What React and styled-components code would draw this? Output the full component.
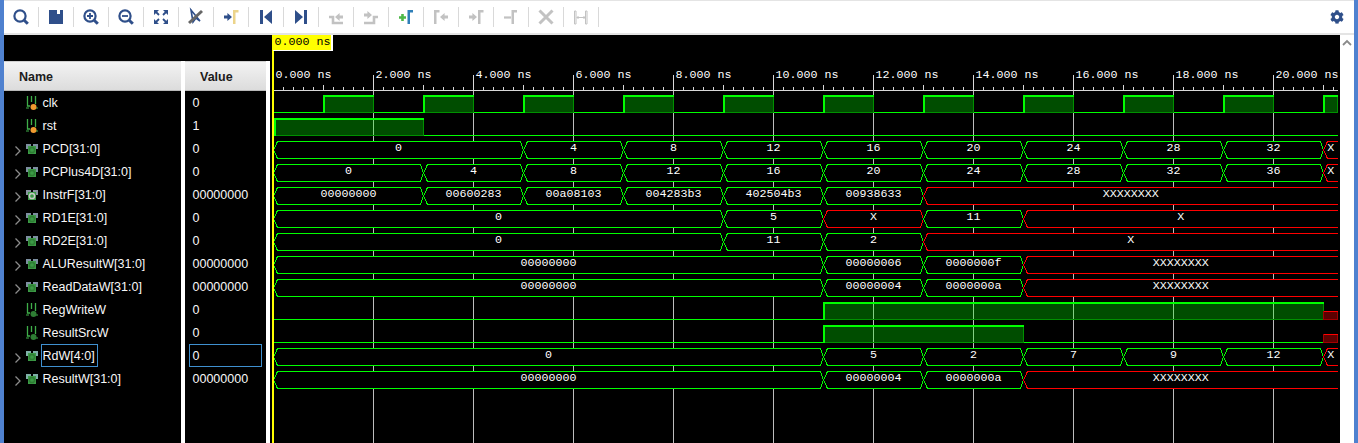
import React from "react";
import styled, { createGlobalStyle } from "styled-components";
import { FaCog } from "react-icons/fa";

const GlobalStyle = createGlobalStyle`
  html, body {
    margin: 0;
    padding: 0;
    background: #fff;
    overflow: hidden;
  }
`;

const NAVY = "#2f4f8a";
const GREY = "#c2c2c2";
const GOLD = "#ecd48a";
const GREEN = "#00ff00";
const RED = "#ff0000";

const Frame = styled.div`
  box-sizing: border-box;
  width: 1358px;
  height: 443px;
  display: flex;
  flex-direction: column;
  overflow: hidden;
  background: #fff;
  border-left: 4px solid #4f81cf;
  border-right: 4px solid #4f81cf;
`;

const Toolbar = styled.div`
  box-sizing: border-box;
  height: 35px;
  flex: none;
  display: flex;
  align-items: center;
  background: #fff;
  border-top: 1px solid #e4e4e4;
  border-bottom: 2px solid #e4e4e4;
`;

const ToolCell = styled.div`
  box-sizing: border-box;
  width: 35px;
  height: 20px;
  display: flex;
  align-items: center;
  justify-content: center;
  border-right: 1px solid #d9d9d9;
`;

const GearCell = styled.div`
  width: 34px;
  margin-left: auto;
  display: flex;
  justify-content: center;
  color: ${NAVY};
`;

const Workspace = styled.div`
  flex: 1;
  display: flex;
  min-height: 0;
`;

const SignalPane = styled.div`
  width: 266px;
  flex: none;
  display: flex;
  flex-direction: column;
  background: #000;
`;

const TopBand = styled.div`
  height: 26px;
  flex: none;
`;

const Columns = styled.div`
  flex: 1;
  display: grid;
  grid-template-columns: 177px 81px;
  column-gap: 4px;
  padding-right: 4px;
  background: #fff;
`;

const Column = styled.div`
  background: #000;
  display: flex;
  flex-direction: column;
`;

const HeaderCell = styled.div`
  box-sizing: border-box;
  height: 30px;
  flex: none;
  display: flex;
  align-items: center;
  padding-top: 1px;
  padding-left: ${({ $inset }) => $inset}px;
  background: linear-gradient(#f3f3f3, #dcdcdc);
  border-top: 1px solid #d0d0d0;
  border-bottom: 1px solid #b8b8b8;
  font: bold 12.5px "Liberation Sans", Arial, sans-serif;
  color: #1c1c1c;
`;

const NameRow = styled.div`
  height: 23px;
  flex: none;
  display: flex;
  align-items: center;
  padding-left: 9px;
`;

const ChevronSlot = styled.div`
  width: 10px;
  height: 12px;
  margin-right: 2px;
  flex: none;
`;

const IconSlot = styled.div`
  width: 14px;
  height: 16px;
  margin-right: 2px;
  flex: none;
`;

const NameLabel = styled.div`
  box-sizing: border-box;
  height: 23px;
  display: flex;
  align-items: center;
  padding: 0 2px 0 0.5px;
  border: 1px solid ${({ $selected }) => ($selected ? "#3f90d0" : "transparent")};
  font: 12.5px "Liberation Sans", Arial, sans-serif;
  color: #f8f8f8;
  white-space: nowrap;
`;

const ValueRow = styled.div`
  box-sizing: border-box;
  height: 23px;
  flex: none;
  margin-left: 4px;
  width: 73px;
  display: flex;
  align-items: center;
  padding-left: 2.5px;
  border: 1px solid ${({ $selected }) => ($selected ? "#3f90d0" : "transparent")};
  font: 12.5px "Liberation Sans", Arial, sans-serif;
  color: #f8f8f8;
`;

const WavePane = styled.div`
  flex: 1;
  background: #000;
  min-width: 0;
`;

const WaveSvg = styled.svg`
  display: block;
  shape-rendering: crispEdges;
`;

const MonoText = styled.text`
  font-family: "Liberation Mono", "Courier New", monospace;
  font-size: 11.67px;
  fill: ${({ $fill }) => $fill || "#fff"};
`;

const ScrollTrack = styled.div`
  width: 14px;
  flex: none;
  padding-top: 4px;
  display: flex;
  justify-content: center;
  background: #fff;
`;

// toolbar glyphs share a 24 box
const bracketAt = (x, color) => (
  <path d={`M${x} 5h5.5v2.4h-3V19H${x}z`} fill={color} />
);
const arrowRight = (x, color) => (
  <path d={`M${x} 10.6h3.4V8l4.6 4-4.6 4v-2.6H${x}z`} fill={color} />
);
const arrowLeft = (x, color) => (
  <path d={`M${x + 8} 10.6h-3.4V8L${x} 12l4.6 4v-2.6h3.4z`} fill={color} />
);

const lens = (
  <g fill="none" stroke={NAVY}>
    <circle cx="11" cy="11" r="5.6" strokeWidth="2.2" />
    <path d="M15.2 15.2l3.6 3.6" strokeWidth="3" />
  </g>
);

const TOOL_ICONS = [
  lens,
  <path
    d="M5 5h8v4h3V5h3v14H5z"
    fill={NAVY}
  />,
  <g>
    {lens}
    <path d="M8 11h6M11 8v6" stroke={NAVY} strokeWidth="1.8" />
  </g>,
  <g>
    {lens}
    <path d="M8 11h6" stroke={NAVY} strokeWidth="1.8" />
  </g>,
  <g fill={NAVY}>
    <path d="M5 5h5L5 10zM19 5h-5l5 5zM5 19h5l-5-5zM19 19h-5l5-5z" />
    <path d="M7 7l3 3M17 7l-3 3M7 17l3-3M17 17l-3-3" stroke={NAVY} strokeWidth="1.8" />
  </g>,
  <g fill="none">
    <path d="M7 5l2 12 3-4 4 3z" stroke={NAVY} strokeWidth="1.6" />
    <path d="M5 18L18 6" stroke="#666" strokeWidth="3" />
  </g>,
  <g>
    {arrowRight(5, NAVY)}
    {bracketAt(14, GOLD)}
  </g>,
  <path d="M6 5h3v14H6zM18 5v14l-8-7z" fill={NAVY} />,
  <path d="M6 5v14l8-7zM15 5h3v14h-3z" fill={NAVY} />,
  <g>
    <path d="M5 12h4v6h10" fill="none" stroke={GREY} strokeWidth="2.6" />
    {arrowLeft(11, GREY)}
  </g>,
  <g>
    <path d="M5 18h10v-6h4" fill="none" stroke={GREY} strokeWidth="2.6" />
    <path d="M5 8.6h3.4V6L13 10l-4.6 4v-2.6H5z" fill={GREY} />
  </g>,
  <g>
    <path d="M5 12.5h7M8.5 9v7" stroke="#4db848" strokeWidth="2.6" />
    {bracketAt(13.5, "#2f7fb8")}
  </g>,
  <g>
    {bracketAt(5, GREY)}
    {arrowLeft(11, GREY)}
  </g>,
  <g>
    {arrowRight(5, GREY)}
    {bracketAt(14, GREY)}
  </g>,
  <g>
    <path d="M5 12.5h7" stroke={GREY} strokeWidth="2.2" />
    {bracketAt(12.5, GREY)}
  </g>,
  <path d="M5.5 5.5l13 13M18.5 5.5l-13 13" stroke={GREY} strokeWidth="3" fill="none" />,
  <g fill="none" stroke={GREY}>
    <path d="M5.5 6h1.5v13H5.5zM16.5 6h1.5v13h-1.5z" strokeWidth="1" />
    <path d="M8 12.5h8M9.5 11l-1.5 1.5 1.5 1.5M14.5 11l1.5 1.5-1.5 1.5" strokeWidth="1" />
  </g>
];

const Chevron = () => (
  <svg width="10" height="12" viewBox="0 0 10 12">
    <path d="M2.5 1.5L7 6l-4.5 4.5" fill="none" stroke="#8c8c8c" strokeWidth="1.3" />
  </svg>
);

const BitIcon = ({ dot }) => (
  <svg width="14" height="16" viewBox="0 0 14 16">
    <path d="M2.5 1v10h2.5M10.5 1v8M6.5 1v6" fill="none" stroke="#3fae49" strokeWidth="1.3" />
    <path d="M1 13h3M11 13h2" stroke="#3fae49" strokeWidth="1" />
    <circle cx="8.5" cy="12" r="3" fill={dot} />
  </svg>
);

const BusIcon = ({ dot, top }) => (
  <svg width="14" height="16" viewBox="0 0 14 16">
    <path d="M1 3h5v5H1zM8 3h5v5H8z" fill={top} />
    <rect x="3" y="5" width="8" height="8" fill="#3c9a46" />
    <circle cx="7" cy="9" r="2.6" fill="none" stroke={dot} strokeWidth="1.5" />
  </svg>
);

const SIGNALS = [
  { name: "clk", value: "0", kind: "bit", dot: "#f09a30" },
  { name: "rst", value: "1", kind: "bit", dot: "#f09a30" },
  { name: "PCD[31:0]", value: "0", kind: "bus" },
  { name: "PCPlus4D[31:0]", value: "0", kind: "bus" },
  { name: "InstrF[31:0]", value: "00000000", kind: "bus", dot: "#c8c8c8", top: "#8a93a0" },
  { name: "RD1E[31:0]", value: "0", kind: "bus" },
  { name: "RD2E[31:0]", value: "0", kind: "bus" },
  { name: "ALUResultW[31:0]", value: "00000000", kind: "bus" },
  { name: "ReadDataW[31:0]", value: "00000000", kind: "bus" },
  { name: "RegWriteW", value: "0", kind: "bit", dot: "#2e7d34" },
  { name: "ResultSrcW", value: "0", kind: "bit", dot: "#2e7d34" },
  { name: "RdW[4:0]", value: "0", kind: "bus", selected: true, top: "#7fb0a8" },
  { name: "ResultW[31:0]", value: "00000000", kind: "bus", top: "#7fb0a8" }
];

const HEADER_BOTTOM = 91;
const ROW_H = 23;
const WAVE_LEFT = 273;
const WAVE_RIGHT = 1338;
const xAt = ns => WAVE_LEFT + ns * 50;

const rowTop = i => HEADER_BOTTOM + i * ROW_H;

// bus rows: [start ns, label, unknown]
const BUSES = {
  2: [[0, "0"], [5, "4"], [7, "8"], [9, "12"], [11, "16"], [13, "20"], [15, "24"], [17, "28"], [19, "32"], [21, "X", true]],
  3: [[0, "0"], [3, "4"], [5, "8"], [7, "12"], [9, "16"], [11, "20"], [13, "24"], [15, "28"], [17, "32"], [19, "36"], [21, "X", true]],
  4: [[0, "00000000"], [3, "00600283"], [5, "00a08103"], [7, "004283b3"], [9, "402504b3"], [11, "00938633"], [13, "XXXXXXXX", true]],
  5: [[0, "0"], [9, "5"], [11, "X", true], [13, "11"], [15, "X", true]],
  6: [[0, "0"], [9, "11"], [11, "2"], [13, "X", true]],
  7: [[0, "00000000"], [11, "00000006"], [13, "0000000f"], [15, "XXXXXXXX", true]],
  8: [[0, "00000000"], [11, "00000004"], [13, "0000000a"], [15, "XXXXXXXX", true]],
  11: [[0, "0"], [11, "5"], [13, "2"], [15, "7"], [17, "9"], [19, "12"], [21, "X", true]],
  12: [[0, "00000000"], [11, "00000004"], [13, "0000000a"], [15, "XXXXXXXX", true]]
};

const BITS = {
  0: { spans: [[1, 2], [3, 4], [5, 6], [7, 8], [9, 10], [11, 12], [13, 14], [15, 16], [17, 18], [19, 20], [21, 21.28]] },
  1: { spans: [[0.02, 3]] },
  9: { spans: [[11, 21]], unknownFrom: 21 },
  10: { spans: [[11, 15]], unknownFrom: 21 }
};

const BitTrace = ({ row, spans, unknownFrom }) => {
  const top = rowTop(row);
  const hi = top + 4.5;
  const lo = top + 21.5;
  const lineEnd = unknownFrom ? xAt(unknownFrom) : WAVE_RIGHT;
  const mid = top + 13;
  return (
    <g>
      <path d={`M${WAVE_LEFT} ${lo}H${lineEnd}`} stroke={GREEN} />
      {spans.map(([from, to]) => {
        const x1 = Math.round(xAt(from)) + 0.5;
        const x2 = Math.round(xAt(to)) + 0.5;
        return (
          <g key={from}>
            <rect x={x1} y={hi} width={x2 - x1} height={lo - hi} fill="#00ff00" fillOpacity="0.3" stroke="#009000" />
            <path d={`M${x1 + 0.5} ${lo}V${hi + 0.5}H${x2}`} fill="none" stroke={GREEN} strokeWidth="2" />
          </g>
        );
      })}
      {unknownFrom && (
        <g>
          <rect x={xAt(unknownFrom) + 0.5} y={mid} width={14} height={lo - mid} fill="#5c0000" stroke="#a00000" />
          <path d={`M${xAt(unknownFrom) + 0.5} ${mid}H${WAVE_RIGHT}`} stroke={RED} />
        </g>
      )}
    </g>
  );
};

const BusTrace = ({ row, segments }) => {
  const top = rowTop(row);
  const hi = top + 4.5;
  const lo = top + 21.5;
  const mid = top + 13;
  return (
    <g>
      {segments.map(([start, label, unknown], i) => {
        const next = segments[i + 1];
        const a = xAt(start) + 0.5;
        const b = next ? xAt(next[0]) + 0.5 : null;
        const color = unknown ? RED : GREEN;
        const points = b
          ? `${a},${mid} ${a + 4},${hi} ${b - 3},${hi} ${b},${mid} ${b - 3},${lo} ${a + 4},${lo}`
          : null;
        const open = `M${WAVE_RIGHT} ${hi}H${a + 4}L${a} ${mid}L${a + 4} ${lo}H${WAVE_RIGHT}`;
        const cx = ((b || WAVE_RIGHT) + a) / 2;
        return (
          <g key={start}>
            {points ? (
              <polygon points={points} fill="#000" stroke={color} />
            ) : (
              <path d={open} fill="#000" stroke={color} />
            )}
            <MonoText x={cx} y={top + 14} textAnchor="middle">
              {label}
            </MonoText>
          </g>
        );
      })}
    </g>
  );
};

const Ruler = () => {
  const ticks = [];
  for (let x = WAVE_LEFT; x < WAVE_RIGHT; x += 10) {
    const offset = x - WAVE_LEFT;
    const major = offset % 100 === 0;
    const mid = offset % 50 === 0;
    const start = major ? 75 : mid ? 85 : 87;
    ticks.push(<path key={x} d={`M${x + 0.5} ${start}V91`} stroke="#d8d8d8" />);
  }
  const labels = [];
  for (let ns = 0; ns <= 20; ns += 2) {
    labels.push(
      <MonoText key={ns} x={xAt(ns) + 2.5} y={78}>
        {`${ns}.000 ns`}
      </MonoText>
    );
  }
  return (
    <g>
      <path d={`M${WAVE_LEFT} 90.5H${WAVE_RIGHT}`} stroke="#d8d8d8" />
      {ticks}
      {labels}
    </g>
  );
};

const GridLines = () => {
  const lines = [];
  for (let ns = 2; ns <= 20; ns += 2) {
    lines.push(<path key={ns} d={`M${xAt(ns) + 0.5} 91V443`} stroke="#bdbdbd" />);
  }
  return <g>{lines}</g>;
};

const Waveform = () => (
  <WaveSvg width="1070" height="408" viewBox="270 35 1070 408">
    <GridLines />
    <Ruler />
    {Object.entries(BITS).map(([row, bit]) => (
      <BitTrace key={row} row={Number(row)} spans={bit.spans} unknownFrom={bit.unknownFrom} />
    ))}
    {Object.entries(BUSES).map(([row, segments]) => (
      <BusTrace key={row} row={Number(row)} segments={segments} />
    ))}
    <rect x="272" y="35" width="2" height="408" fill="#ffff00" />
    <rect x="273" y="35" width="60" height="16" fill="#fff" />
    <rect x="273" y="35" width="58" height="15" fill="#ffff00" />
    <MonoText x={274.5} y={44.5} $fill="#000">
      0.000 ns
    </MonoText>
  </WaveSvg>
);

const SignalName = ({ signal }) => (
  <NameRow>
    <ChevronSlot>{signal.kind === "bus" && <Chevron />}</ChevronSlot>
    <IconSlot>
      {signal.kind === "bus" ? (
        <BusIcon dot={signal.dot || "#2e7d34"} top={signal.top || "#7d8fa0"} />
      ) : (
        <BitIcon dot={signal.dot} />
      )}
    </IconSlot>
    <NameLabel $selected={signal.selected}>{signal.name}</NameLabel>
  </NameRow>
);

export default function App() {
  return (
    <Frame>
      <GlobalStyle />
      <Toolbar>
        {TOOL_ICONS.map((icon, i) => (
          <ToolCell key={i}>
            <svg width="24" height="24" viewBox="0 0 24 24">
              {icon}
            </svg>
          </ToolCell>
        ))}
        <GearCell>
          <FaCog size={14} />
        </GearCell>
      </Toolbar>
      <Workspace>
        <SignalPane>
          <TopBand />
          <Columns>
            <Column>
              <HeaderCell $inset={15}>Name</HeaderCell>
              {SIGNALS.map(signal => (
                <SignalName key={signal.name} signal={signal} />
              ))}
            </Column>
            <Column>
              <HeaderCell $inset={15}>Value</HeaderCell>
              {SIGNALS.map(signal => (
                <ValueRow key={signal.name} $selected={signal.selected}>
                  {signal.value}
                </ValueRow>
              ))}
            </Column>
          </Columns>
        </SignalPane>
        <WavePane>
          <Waveform />
        </WavePane>
        <ScrollTrack>
          <svg width="12" height="8" viewBox="0 0 12 8">
            <path d="M2 6l4-4 4 4" fill="none" stroke="#8a8a8a" strokeWidth="1.8" />
          </svg>
        </ScrollTrack>
      </Workspace>
    </Frame>
  );
}
